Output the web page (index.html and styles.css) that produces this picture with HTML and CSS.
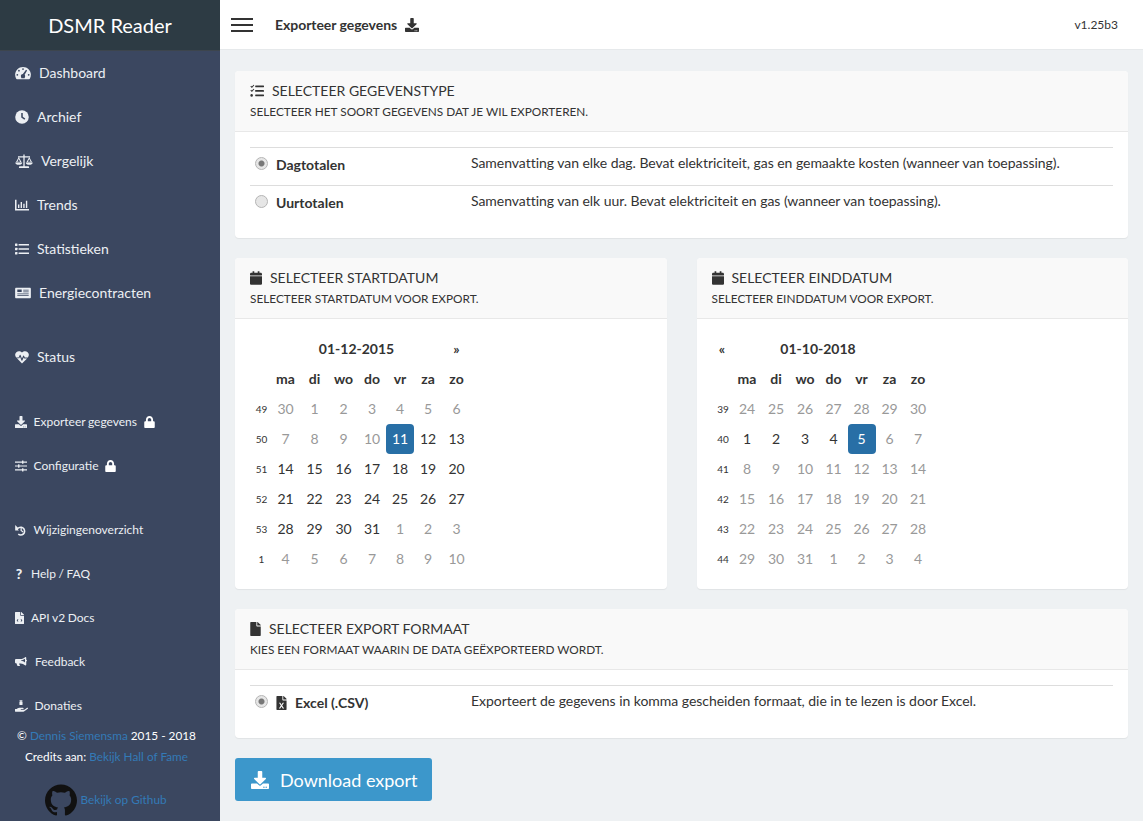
FILE: index.html
```html
<!DOCTYPE html>
<html lang="nl">
<head>
    <meta charset="UTF-8">
    <title>DSMR Reader - Exporteer gegevens</title>
    <meta name="viewport" content="width=device-width, initial-scale=1.0">
    <link rel="stylesheet" href="styles.css">
</head>
<body>
<svg class="defs" width="0" height="0">
    <symbol id="i-download" viewBox="0 0 512 512"><path d="M216 0h80c13.3 0 24 10.7 24 24v168h87.7c17.8 0 26.7 21.5 14.1 34.1L269.7 378.3c-7.5 7.5-19.8 7.5-27.3 0L90.1 226.1c-12.6-12.6-3.7-34.1 14.1-34.1H192V24c0-13.3 10.7-24 24-24zm296 376v112c0 13.3-10.7 24-24 24H24c-13.3 0-24-10.7-24-24V376c0-13.3 10.7-24 24-24h146.7l49 49c20.1 20.1 52.5 20.1 72.6 0l49-49H488c13.3 0 24 10.7 24 24zm-124 88c0-11-9-20-20-20s-20 9-20 20 9 20 20 20 20-9 20-20zm64 0c0-11-9-20-20-20s-20 9-20 20 9 20 20 20 20-9 20-20z"/></symbol>
    <symbol id="i-lock" viewBox="0 0 448 512"><path d="M400 224h-24v-72C376 68.2 307.8 0 224 0S72 68.2 72 152v72H48c-26.5 0-48 21.5-48 48v192c0 26.5 21.5 48 48 48h352c26.5 0 48-21.5 48-48V272c0-26.5-21.5-48-48-48zm-104 0H152v-72c0-39.7 32.3-72 72-72s72 32.3 72 72v72z"/></symbol>
    <symbol id="i-calendar" viewBox="0 0 448 512"><path d="M12 192h424c6.6 0 12 5.4 12 12v260c0 26.5-21.5 48-48 48H48c-26.5 0-48-21.5-48-48V204c0-6.6 5.4-12 12-12zm436-44v-36c0-26.5-21.5-48-48-48h-48V12c0-6.6-5.4-12-12-12h-40c-6.6 0-12 5.4-12 12v52H160V12c0-6.6-5.4-12-12-12h-40c-6.6 0-12 5.4-12 12v52H48C21.5 64 0 85.5 0 112v36c0 6.6 5.4 12 12 12h424c6.6 0 12-5.4 12-12z"/></symbol>
    <symbol id="i-file" viewBox="0 0 384 512"><path d="M224 136V0H24C10.7 0 0 10.7 0 24v464c0 13.3 10.7 24 24 24h336c13.3 0 24-10.7 24-24V160H248c-13.2 0-24-10.8-24-24zm160-14.1v6.1H256V0h6.1c6.4 0 12.5 2.5 17 7l97.9 98c4.5 4.5 7 10.6 7 16.9z"/></symbol>
    <symbol id="i-tasks" viewBox="0 0 512 512"><path d="M40 60l30 30 62-66 26 24-88 94-56-54zM40 208l30 30 62-66 26 24-88 94-56-54z"/><circle cx="60" cy="416" r="46"/><rect x="190" y="56" width="322" height="62" rx="14"/><rect x="190" y="222" width="322" height="62" rx="14"/><rect x="190" y="386" width="322" height="62" rx="14"/></symbol>
</svg>

<aside class="sidebar">
    <div class="brand">DSMR Reader</div>
    <nav class="menu">
        <a class="item"><svg class="icon" width="16" height="14" viewBox="0 0 576 512"><path d="M288 32C129 32 0 161 0 320c0 53 14 102 39 144 6 10 16 16 28 16h442c12 0 22-6 28-16 25-42 39-91 39-144C576 161 447 32 288 32z"/><g fill="#3b4760"><circle cx="288" cy="112" r="32"/><circle cx="140" cy="172" r="32"/><circle cx="80" cy="320" r="32"/><circle cx="496" cy="320" r="32"/><path d="M398 138l40 26-90 160c12 16 18 28 18 44 0 32-14 62-20 76H230c-6-14-20-44-20-76 0-40 34-72 74-74z"/></g></svg>Dashboard</a>
        <a class="item"><svg class="icon" width="14" height="14" viewBox="0 0 512 512"><circle cx="256" cy="256" r="248"/><path d="M228 110h56v136l92 66-32 46-116-84z" fill="#3b4760"/></svg>Archief</a>
        <a class="item"><svg class="icon" width="18" height="14" viewBox="0 0 640 512"><path d="M296 20h48v428h-48zM160 452h320c13 0 24 11 24 24v32H136v-32c0-13 11-24 24-24zM100 84h440v44H100z"/><path d="M128 110L24 300h208zM128 180l-52 100h104zM512 110L408 300h208zM512 180l-52 100h104z" fill-rule="evenodd"/><path d="M0 310h256c0 50-58 86-128 86S0 360 0 310zM384 310h256c0 50-58 86-128 86s-128-36-128-86z"/></svg>Vergelijk</a>
        <a class="item"><svg class="icon" width="14" height="14" viewBox="0 0 512 512"><path d="M0 64h56v336h456v56H0z"/><path d="M110 240h50v130h-50zM206 150h50v220h-50zM302 210h50v160h-50zM398 100h50v270h-50z"/></svg>Trends</a>
        <a class="item"><svg class="icon" width="14" height="14" viewBox="0 0 512 512"><rect x="0" y="58" width="90" height="84" rx="12"/><rect x="0" y="214" width="90" height="84" rx="12"/><rect x="0" y="370" width="90" height="84" rx="12"/><rect x="130" y="70" width="382" height="60" rx="10"/><rect x="130" y="226" width="382" height="60" rx="10"/><rect x="130" y="382" width="382" height="60" rx="10"/></svg>Statistieken</a>
        <a class="item"><svg class="icon" width="16" height="14" viewBox="0 0 576 512"><path fill-rule="evenodd" d="M40 64h496c22 0 40 18 40 40v304c0 22-18 40-40 40H40c-22 0-40-18-40-40V104c0-22 18-40 40-40zm40 64v90h160v-90zm216 10v30h200v-30zm0 60v30h200v-30zM80 270v30h416v-30zm0 70v30h416v-30z"/></svg>Energiecontracten</a>
        <a class="item gap-a"><svg class="icon" width="14" height="14" viewBox="0 0 512 512"><path fill-rule="evenodd" d="M256 92c60-62 150-62 206-14 58 50 60 136 8 192H360l-32-64a16 16 0 0 0-29 0l-46 108-50-130a16 16 0 0 0-30-1l-39 87H42C-10 214-8 128 50 78 106 30 196 30 256 92z"/><path d="M70 304h76a16 16 0 0 0 15-9l23-52 54 140a16 16 0 0 0 30 0l48-112 18 34a16 16 0 0 0 14 9h94L256 494z"/></svg>Status</a>

        <a class="item small gap-b"><svg class="icon" width="12" height="12"><use href="#i-download"/></svg>Exporteer gegevens<svg class="lock" width="11" height="12"><use href="#i-lock"/></svg></a>
        <a class="item small"><svg class="icon" width="12" height="12" viewBox="0 0 512 512"><path d="M0 64h512v52H0zM0 230h512v52H0zM0 396h512v52H0z"/><rect x="300" y="20" width="60" height="140" rx="14"/><rect x="130" y="186" width="60" height="140" rx="14"/><rect x="300" y="352" width="60" height="140" rx="14"/></svg>Configuratie<svg class="lock" width="11" height="12"><use href="#i-lock"/></svg></a>

        <a class="item small gap-a"><svg class="icon" width="12" height="12" viewBox="0 0 512 512"><path d="M8 40l120 120-40 34c40-66 120-100 196-84 100 22 170 116 158 218-12 100-98 176-198 176-46 0-90-16-124-44l38-50c24 20 54 30 86 30 70 0 130-56 134-126 6-76-52-142-128-146-50-2-98 22-124 64l40 40H8z"/><path d="M236 150h52v112l76 56-30 40-98-74z"/></svg>Wijzigingenoverzicht</a>
        <a class="item small"><span class="qmark">?</span>Help / FAQ</a>
        <a class="item small"><svg class="icon file-ic" width="9" height="12" viewBox="0 0 384 512"><use href="#i-file"/><path d="M120 300l-50 60 50 60 26-22-32-38 32-38zM264 300l50 60-50 60-26-22 32-38-32-38z" fill="#3b4760"/></svg>API v2 Docs</a>
        <a class="item small"><svg class="icon bull-ic" width="12" height="12" viewBox="0 0 576 512"><path d="M540 210V48c0-30-36-46-58-26-56 50-130 92-208 92H56c-30 0-56 26-56 56v96c0 30 26 56 56 56h30c-4 40 6 90 30 118 6 8 16 12 26 12h74c20 0 30-24 18-38-22-26-36-56-36-92h76c78 0 152 42 208 92 22 20 58 4 58-26V226c20-4 36-20 36-40s-16-36-36-40z"/><path d="M480 96v180c-54-40-118-72-190-78v-26c72-6 136-36 190-76z" fill="#3b4760"/></svg>Feedback</a>
        <a class="item small"><svg class="icon hand-ic" width="13" height="12" viewBox="0 0 576 512"><path d="M220 0h90a24 24 0 0 1 24 24v30h-40v30h40v100a24 24 0 0 1-24 24h-90a24 24 0 0 1-24-24V84h40V54h-40V24a24 24 0 0 1 24-24z"/><path d="M565 340c-12-12-30-12-44 0L430 410c-12 8-26 14-42 14H272c-10 0-16-8-16-16s6-16 16-16h78c16 0 30-10 32-26 4-20-12-38-32-38H192c-26 0-52 10-72 26l-46 38H16c-10 0-16 8-16 16v84c0 10 6 16 16 16h356c16 0 30-6 42-14l152-120c14-12 14-32-1-50z"/></svg>Donaties</a>
    </nav>
    <div class="credits">
        <p>&copy; <a>Dennis Siemensma</a> 2015 - 2018</p>
        <p>Credits aan: <a>Bekijk Hall of Fame</a></p>
    </div>
    <a class="github"><svg width="32" height="32" viewBox="0 0 24 24"><path d="M12 .297c-6.63 0-12 5.373-12 12 0 5.303 3.438 9.8 8.205 11.385.6.113.82-.258.82-.577 0-.285-.01-1.04-.015-2.04-3.338.724-4.042-1.61-4.042-1.61C4.422 18.07 3.633 17.7 3.633 17.7c-1.087-.744.084-.729.084-.729 1.205.084 1.838 1.236 1.838 1.236 1.07 1.835 2.809 1.305 3.495.998.108-.776.417-1.305.76-1.605-2.665-.3-5.466-1.332-5.466-5.93 0-1.31.465-2.38 1.235-3.22-.135-.303-.54-1.523.105-3.176 0 0 1.005-.322 3.3 1.23.96-.267 1.98-.399 3-.405 1.02.006 2.04.138 3 .405 2.28-1.552 3.285-1.23 3.285-1.23.645 1.653.24 2.873.12 3.176.765.84 1.23 1.91 1.23 3.22 0 4.61-2.805 5.625-5.475 5.92.42.36.81 1.096.81 2.22 0 1.606-.015 2.896-.015 3.286 0 .315.21.69.825.57C20.565 22.092 24 17.592 24 12.297c0-6.627-5.373-12-12-12"/></svg>Bekijk op Github</a>
</aside>

<div class="page">
    <header class="topbar">
        <div class="burger"><span></span><span></span><span></span></div>
        <h1 class="page-title">Exporteer gegevens<svg width="14" height="14"><use href="#i-download"/></svg></h1>
        <span class="version">v1.25b3</span>
    </header>

    <main class="content">
        <section class="card">
            <div class="card-head">
                <h2><svg width="14" height="14"><use href="#i-tasks"/></svg>Selecteer gegevenstype</h2>
                <p>Selecteer het soort gegevens dat je wil exporteren.</p>
            </div>
            <div class="card-body">
                <div class="opt-row">
                    <label class="opt-label"><input type="radio" name="soort" checked disabled>Dagtotalen</label>
                    <div class="opt-desc">Samenvatting van elke dag. Bevat elektriciteit, gas en gemaakte kosten (wanneer van toepassing).</div>
                </div>
                <div class="opt-row">
                    <label class="opt-label"><input type="radio" name="soort" disabled>Uurtotalen</label>
                    <div class="opt-desc">Samenvatting van elk uur. Bevat elektriciteit en gas (wanneer van toepassing).</div>
                </div>
            </div>
        </section>

        <div class="two-cols">
            <section class="card">
                <div class="card-head">
                    <h2><svg width="12" height="14"><use href="#i-calendar"/></svg>Selecteer startdatum</h2>
                    <p>Selecteer startdatum voor export.</p>
                </div>
                <div class="card-body">
                    <table class="cal">
                        <colgroup><col class="c-wk"><col class="c-29"><col class="c-29"><col class="c-29"><col class="c-28"><col class="c-28"><col class="c-28"><col class="c-29"></colgroup>
                        <tr class="cal-title"><th></th><th colspan="6">01-12-2015</th><th>&raquo;</th></tr>
                        <tr class="cal-days"><th></th><th>ma</th><th>di</th><th>wo</th><th>do</th><th>vr</th><th>za</th><th>zo</th></tr>
                        <tr><td class="wk">49</td><td class="off">30</td><td class="off">1</td><td class="off">2</td><td class="off">3</td><td class="off">4</td><td class="off">5</td><td class="off">6</td></tr>
                        <tr><td class="wk">50</td><td class="off">7</td><td class="off">8</td><td class="off">9</td><td class="off">10</td><td class="sel">11</td><td>12</td><td>13</td></tr>
                        <tr><td class="wk">51</td><td>14</td><td>15</td><td>16</td><td>17</td><td>18</td><td>19</td><td>20</td></tr>
                        <tr><td class="wk">52</td><td>21</td><td>22</td><td>23</td><td>24</td><td>25</td><td>26</td><td>27</td></tr>
                        <tr><td class="wk">53</td><td>28</td><td>29</td><td>30</td><td>31</td><td class="off">1</td><td class="off">2</td><td class="off">3</td></tr>
                        <tr><td class="wk">1</td><td class="off">4</td><td class="off">5</td><td class="off">6</td><td class="off">7</td><td class="off">8</td><td class="off">9</td><td class="off">10</td></tr>
                    </table>
                </div>
            </section>
            <section class="card">
                <div class="card-head">
                    <h2><svg width="12" height="14"><use href="#i-calendar"/></svg>Selecteer einddatum</h2>
                    <p>Selecteer einddatum voor export.</p>
                </div>
                <div class="card-body">
                    <table class="cal">
                        <colgroup><col class="c-wk"><col class="c-29"><col class="c-29"><col class="c-29"><col class="c-28"><col class="c-28"><col class="c-28"><col class="c-29"></colgroup>
                        <tr class="cal-title"><th>&laquo;</th><th colspan="6">01-10-2018</th><th></th></tr>
                        <tr class="cal-days"><th></th><th>ma</th><th>di</th><th>wo</th><th>do</th><th>vr</th><th>za</th><th>zo</th></tr>
                        <tr><td class="wk">39</td><td class="off">24</td><td class="off">25</td><td class="off">26</td><td class="off">27</td><td class="off">28</td><td class="off">29</td><td class="off">30</td></tr>
                        <tr><td class="wk">40</td><td>1</td><td>2</td><td>3</td><td>4</td><td class="sel">5</td><td class="off">6</td><td class="off">7</td></tr>
                        <tr><td class="wk">41</td><td class="off">8</td><td class="off">9</td><td class="off">10</td><td class="off">11</td><td class="off">12</td><td class="off">13</td><td class="off">14</td></tr>
                        <tr><td class="wk">42</td><td class="off">15</td><td class="off">16</td><td class="off">17</td><td class="off">18</td><td class="off">19</td><td class="off">20</td><td class="off">21</td></tr>
                        <tr><td class="wk">43</td><td class="off">22</td><td class="off">23</td><td class="off">24</td><td class="off">25</td><td class="off">26</td><td class="off">27</td><td class="off">28</td></tr>
                        <tr><td class="wk">44</td><td class="off">29</td><td class="off">30</td><td class="off">31</td><td class="off">1</td><td class="off">2</td><td class="off">3</td><td class="off">4</td></tr>
                    </table>
                </div>
            </section>
        </div>

        <section class="card">
            <div class="card-head">
                <h2><svg width="11" height="14"><use href="#i-file"/></svg>Selecteer export formaat</h2>
                <p>Kies een formaat waarin de data geëxporteerd wordt.</p>
            </div>
            <div class="card-body">
                <div class="opt-row">
                    <label class="opt-label"><input type="radio" name="formaat" checked disabled><svg class="xls" width="11" height="14" viewBox="0 0 384 512"><use href="#i-file"/><path d="M100 250l48 0 44 70 44-70 48 0-68 100 72 110h-50l-46-74-46 74h-50l72-110z" fill="#fff"/></svg>Excel (.CSV)</label>
                    <div class="opt-desc">Exporteert de gegevens in komma gescheiden formaat, die in te lezen is door Excel.</div>
                </div>
            </div>
        </section>

        <button class="btn" type="button"><svg width="18" height="18"><use href="#i-download"/></svg>Download export</button>
    </main>
</div>
</body>
</html>
```

FILE: styles.css
```css
* {
    box-sizing: border-box;
}

html, body {
    height: 100%;
}

body {
    margin: 0;
    display: flex;
    background-color: #eef1f3;
    color: #333;
    font-family: Lato, "Open Sans", sans-serif;
    font-size: 14px;
    line-height: 20px;
    overflow: hidden;
}

svg {
    fill: currentColor;
    flex: none;
}

.defs {
    position: absolute;
}

/* sidebar */
.sidebar {
    width: 220px;
    height: 821px;
    flex: none;
    background-color: #3b4760;
    color: #eceff3;
}

.brand {
    height: 51px;
    background-color: #2d3b44;
    border-bottom: 1px solid #3d454d;
    color: #fff;
    font-size: 20px;
    line-height: 50px;
    text-align: center;
}

.item {
    display: flex;
    align-items: center;
    height: 44px;
    padding-left: 15px;
}

.item .icon {
    margin-right: 8px;
}

.item.small {
    font-size: 12px;
    word-spacing: -0.5px;
}

.item.small .icon {
    margin-right: 6.5px;
}

.item.small .file-ic {
    margin-right: 7px;
}

.item.small .bull-ic {
    margin-right: 8px;
}

.qmark {
    width: 8px;
    margin-right: 8px;
    font-size: 14px;
    font-weight: 900;
    text-align: center;
}

.lock {
    margin-left: 6.5px;
    color: #fff;
}

.gap-a {
    margin-top: 20px;
}

.gap-b {
    margin-top: 21px;
}

.credits {
    margin-top: -3px;
    padding-right: 7px;
    color: #fff;
    font-size: 11.8px;
    text-align: center;
}

.credits p {
    margin: 0;
    line-height: 21px;
}

.credits a,
.github {
    color: #337ab7;
}

.github {
    display: flex;
    align-items: center;
    justify-content: center;
    gap: 3px;
    margin-top: 17px;
    padding-right: 8px;
    font-size: 11.8px;
}

.github svg {
    fill: #111;
}

/* topbar */
.page {
    flex: 1;
    min-width: 0;
}

.topbar {
    display: flex;
    align-items: center;
    height: 50px;
    padding: 0 25px 0 11px;
    background-color: #fff;
    border-bottom: 1px solid #e6e9eb;
}

.burger {
    width: 22px;
    margin-right: 22px;
}

.burger span {
    display: block;
    height: 2px;
    margin: 4px 0;
    background-color: #333;
}

.page-title {
    display: flex;
    align-items: center;
    gap: 8px;
    margin: 0;
    font-size: 14px;
    font-weight: 700;
    letter-spacing: -0.05px;
}

.version {
    margin-left: auto;
    font-size: 12px;
}

/* cards */
.content {
    padding: 21px 15px 20px;
}

.card {
    margin-bottom: 20px;
    background-color: #fff;
    border-radius: 4px;
    box-shadow: 0 1px 1px rgba(0, 0, 0, 0.06);
    overflow: hidden;
}

.card-head {
    height: 61px;
    padding: 10px 15px 0;
    background-color: #f9f9f9;
    border-bottom: 1px solid #e8e8e8;
}

.card-head h2 {
    display: flex;
    align-items: center;
    gap: 8px;
    margin: 0;
    font-size: 14px;
    font-weight: 400;
    line-height: 20px;
    text-transform: uppercase;
}

.card-head p {
    margin: 2px 0 0;
    font-size: 11.8px;
    line-height: 18px;
    text-transform: uppercase;
}

.card-body {
    padding: 15px;
}

.opt-row {
    display: flex;
    height: 38px;
    border-top: 1px solid #ddd;
}

.opt-label {
    display: flex;
    align-items: center;
    width: 221px;
    height: 33px;
    padding-left: 5px;
    font-weight: 700;
}

.opt-label input {
    appearance: none;
    width: 13px;
    height: 13px;
    margin: -3px 8px 0 0;
    background-color: #e6e6e6;
    border: 1px solid #b5b5b5;
    border-radius: 50%;
}

.opt-label input:checked {
    background: radial-gradient(circle, #777 0, #777 2.5px, #e6e6e6 3.5px);
}

.xls {
    margin-right: 8px;
}

.opt-desc {
    padding-top: 5px;
    letter-spacing: -0.04px;
}

.two-cols {
    display: grid;
    grid-template-columns: 1fr 1fr;
    column-gap: 30px;
}

/* calendars */
.cal {
    width: 221px;
    table-layout: fixed;
    border-collapse: separate;
    border-spacing: 0;
}

.c-wk {
    width: 21px;
}

.c-29 {
    width: 29px;
}

.c-28 {
    width: 28px;
}

.cal th,
.cal td {
    height: 30px;
    padding: 0;
    font-size: 14px;
    text-align: center;
}

.cal th {
    font-weight: 700;
}

.cal .wk {
    padding-left: 2px;
    font-size: 10px;
}

.cal .off {
    color: #999;
}

.cal .sel {
    background-color: #286fa6;
    border-radius: 4px;
    color: #fff;
}

/* button */
.btn {
    display: flex;
    align-items: center;
    gap: 11px;
    width: 197px;
    height: 43px;
    padding: 0 0 0 16px;
    background-color: #3c97cb;
    border: none;
    border-radius: 3px;
    color: #fff;
    font-family: inherit;
    font-size: 18px;
    white-space: nowrap;
}
```
